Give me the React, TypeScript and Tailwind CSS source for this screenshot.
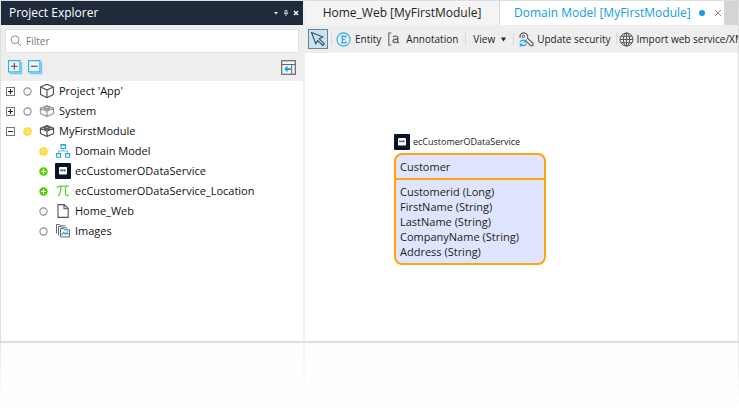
import type { ReactNode } from 'react';

const INK = '#4a4a4a';
const BLUE = '#1fa8ee';

function SearchIcon() {
  return (
    <svg width="12" height="12" viewBox="0 0 12 12" fill="none" stroke="#8c8c8c">
      <circle cx="5" cy="4.7" r="3.9" />
      <path d="M7.8 7.6 11.2 11.2" />
    </svg>
  );
}

function StackIcon({ plus }: { plus?: boolean }) {
  return (
    <svg width="15" height="15" viewBox="0 0 15 15" fill="none">
      <path d="M13.5 2v11.5H2" stroke="#6cc9f5" strokeWidth="1.4" />
      <rect x=".6" y=".6" width="11.3" height="11.3" fill="#f4f4f4" stroke="#26b4f4" strokeWidth="1.2" />
      <path d={plus ? 'M3 6.3h6.6M6.3 3v6.6' : 'M3 6.3h6.6'} stroke={INK} strokeWidth="1.1" />
    </svg>
  );
}

function DockIcon() {
  return (
    <svg width="15" height="15" viewBox="0 0 15 15" fill="none">
      <rect x=".7" y=".7" width="13.6" height="13.6" fill="#f6f6f6" stroke="#666" strokeWidth="1.2" />
      <path d="M1 4.5h13M10.7 4.5V14" stroke="#666" />
      <path d="M9.8 9H5" stroke="#12a6f0" strokeWidth="2" />
      <path d="M6.6 5.8v6.4L3 9z" fill="#12a6f0" />
    </svg>
  );
}

function Expander({ open }: { open?: boolean }) {
  return (
    <svg width="9" height="9" viewBox="0 0 9 9" fill="none">
      <rect x=".5" y=".5" width="8" height="8" stroke="#777" />
      <path d={open ? 'M2 4.5h5' : 'M2 4.5h5M4.5 2v5'} stroke="#222" strokeWidth={open ? 1 : 1.2} />
    </svg>
  );
}

type Status = 'none' | 'changed' | 'added';

function StatusDot({ status }: { status: Status }) {
  return (
    <svg width="9" height="9" viewBox="0 0 9 9">
      {status === 'none' && <circle cx="4.5" cy="4.5" r="3.6" fill="#fff" stroke="#8a8a8a" strokeWidth="1.1" />}
      {status === 'changed' && <circle cx="4.5" cy="4.5" r="3.9" fill="#ffe05c" stroke="#f9d443" />}
      {status === 'added' && (
        <>
          <circle cx="4.5" cy="4.5" r="4.2" fill="#4fd000" />
          <path d="M2 4.5h5M4.5 2v5" stroke="#fff" strokeWidth="1.2" />
        </>
      )}
    </svg>
  );
}

function CubeIcon() {
  return (
    <svg width="16" height="16" viewBox="0 0 16 16" fill="none" stroke={INK} strokeWidth="1.1" strokeLinejoin="round">
      <path d="M8 1.2 14.4 4v7.4L8 14.8 1.6 11.4V4zM1.6 4 8 7l6.4-3M8 7v7.8" />
    </svg>
  );
}

function ModuleIcon({ color }: { color: string }) {
  return (
    <svg width="16" height="16" viewBox="0 0 16 16" fill="none" stroke={color} strokeWidth="1.1" strokeLinejoin="round">
      <path d="M8 2.4 14.6 5.2v5.4L8 13.6l-6.6-3V5.2zM1.4 5.2 8 8.2l6.6-3M8 8.2v5.4" />
      <path d="M5.2 4.6 8 3.6l2.8 1v1.3L8 7 5.2 5.9zM5.2 4.7 8 5.6l2.8-.9" />
    </svg>
  );
}

function DomainIcon() {
  return (
    <svg width="16" height="16" viewBox="0 0 16 16" fill="none" stroke={BLUE} strokeWidth="1.1">
      <path d="M6 1.6h4.4v3.9H6zM1.6 10.5h4v3.7h-4zM10.6 10.5h4v3.7h-4z" />
      <path d="M8.2 5.5V8M3.6 10.5V8h9v2.5" stroke="#6cbfe8" />
      <path d="M6 2h4.4M1.6 10.8h4M10.6 10.8h4" />
    </svg>
  );
}

function ServiceIcon() {
  return (
    <svg width="16" height="16" viewBox="0 0 16 16">
      <rect width="16" height="16" rx="1" fill="#071427" />
      <rect x="4" y="4" width="8" height="7.6" rx=".8" fill="#fff" />
      <path d="M5.2 7.4h5.6" stroke="#3c4658" strokeWidth="1.6" strokeDasharray="1.5 .4" />
    </svg>
  );
}

function PiIcon() {
  return (
    <svg width="16" height="16" viewBox="0 0 16 16" fill="none" stroke="#63d13e" strokeWidth="1.3">
      <path d="M2 5.2C2.4 3.6 3.2 3.2 4.6 3.2H14M5.9 3.4c0 4-.5 7.6-3 9.6M10.5 3.4v7.2c0 2 1.6 2.6 3.1 1.4" />
    </svg>
  );
}

function PageIcon() {
  return (
    <svg width="16" height="16" viewBox="0 0 16 16" fill="none" stroke="#555" strokeWidth="1.1">
      <path d="M3 1.6h6.2l4 4v8.8H3zM9 1.8v4h4" />
    </svg>
  );
}

function ImagesIcon() {
  return (
    <svg width="16" height="16" viewBox="0 0 16 16" fill="none" stroke="#666" strokeWidth="1">
      <path d="M1.5 10.5v-9h3l1 1.3h4.7M3.5 12.5v-9h3l1 1.3h4.7" />
      <path d="M5.5 13.9V5.5h3l1 1.3h5v7.1z" fill="#fff" />
      <path d="m6.6 12 2.2-2.5 1.7 1.7 1.3-1.3 1.8 1.6" stroke={BLUE} strokeWidth="1.3" />
      <circle cx="12.4" cy="8.8" r=".7" fill={BLUE} stroke="none" />
    </svg>
  );
}

function PointerIcon() {
  return (
    <svg width="16" height="16" viewBox="0 0 16 16" fill="none" stroke="#454b50" strokeWidth="1.1" strokeLinejoin="round">
      <path d="M1.5 1.5 13 6 9.2 7.8 14.4 12.8 12.7 14.5 7.6 9.4 5.9 13z" />
    </svg>
  );
}

function EntityIcon() {
  return (
    <svg width="15" height="15" viewBox="0 0 15 15" fill="none" stroke="#27aeef">
      <circle cx="7.5" cy="7.5" r="6.6" strokeWidth="1.1" />
      <path d="M5 4.2h4.8v1.5M5 10.8h4.8V9.3M6.4 4.2v6.6M6.4 7.4h2.5" strokeWidth="1.3" />
    </svg>
  );
}

function AnnotationIcon() {
  return (
    <svg width="12" height="14" viewBox="0 0 12 14" fill="none" stroke="#666">
      <path d="M3.4 1H.8v12h2.6" strokeWidth="1.1" />
      <path d="M5 5.1c1.4-1.5 4.8-1.4 4.8.9V10c0 .5.5.8 1.2.6M9.8 7C6.7 7 5 7.4 5 9.1c0 2 3.5 2 4.8 0" strokeWidth="1.4" />
    </svg>
  );
}

function SecurityIcon() {
  return (
    <svg width="15" height="15" viewBox="0 0 15 15" fill="none">
      <path
        d="M1.2 5.8C.1 2.4 3.2.1 6 1.1c2.3.8 3.2 3.2 2.4 5.1l5.5 5.1v2.4h-2.3l-4.6-4.5"
        stroke="#555"
        strokeWidth="1.1"
      />
      <circle cx="4.4" cy="4.2" r="1.2" stroke="#555" />
      <path d="M1 10.2C2 7.7 5.4 7.5 6.8 9.6M7 7.4v2.4H4.7M7.4 11.7c-1 2.5-4.4 2.6-5.8.6M1.3 14.5V12h2.4" stroke={BLUE} strokeWidth="1.2" />
    </svg>
  );
}

function GlobeIcon() {
  return (
    <svg width="15" height="15" viewBox="0 0 15 15" fill="none" stroke="#555">
      <circle cx="7.5" cy="7.5" r="6.5" />
      <ellipse cx="7.5" cy="7.5" rx="3.1" ry="6.5" />
      <path d="M1 7.5h13M7.5 1v13M2 4.3h11M2 10.7h11" />
    </svg>
  );
}

interface Node {
  label: string;
  status: Status;
  icon: ReactNode;
  level: 0 | 1;
  open?: boolean;
}

const nodes: Node[] = [
  { label: "Project 'App'", status: 'none', icon: <CubeIcon />, level: 0 },
  { label: 'System', status: 'none', icon: <ModuleIcon color="#929292" />, level: 0 },
  { label: 'MyFirstModule', status: 'changed', icon: <ModuleIcon color="#4c4c4c" />, level: 0, open: true },
  { label: 'Domain Model', status: 'changed', icon: <DomainIcon />, level: 1 },
  { label: 'ecCustomerODataService', status: 'added', icon: <ServiceIcon />, level: 1 },
  { label: 'ecCustomerODataService_Location', status: 'added', icon: <PiIcon />, level: 1 },
  { label: 'Home_Web', status: 'none', icon: <PageIcon />, level: 1 },
  { label: 'Images', status: 'none', icon: <ImagesIcon />, level: 1 },
];

const attributes = [
  'Customerid (Long)',
  'FirstName (String)',
  'LastName (String)',
  'CompanyName (String)',
  'Address (String)',
];

function TreeRow({ node }: { node: Node }) {
  return (
    <li className={`flex h-5 items-center whitespace-nowrap ${node.level ? 'pl-[38px]' : 'pl-[5px]'}`}>
      {node.level === 0 && (
        <button aria-label={node.open ? 'Collapse' : 'Expand'} className="mr-2 shrink-0">
          <Expander open={node.open} />
        </button>
      )}
      <span className="mr-[7px] shrink-0"><StatusDot status={node.status} /></span>
      <span className="mr-1 shrink-0">{node.icon}</span>
      <span>{node.label}</span>
    </li>
  );
}

function ProjectExplorer() {
  return (
    <aside className="flex w-[304px] shrink-0 flex-col border-r-2 border-[#f0f0f0] bg-white">
      <header className="flex h-6 items-center bg-[#1f2a3b] pr-1 pl-2 text-white">
        <h1 className="flex-1 text-xs">Project Explorer</h1>
        <div className="flex items-center gap-1">
          <button aria-label="Window menu">
            <svg width="6" height="6" viewBox="0 0 6 6"><path d="M1 2h4L3 4.4z" fill="#fff" /></svg>
          </button>
          <button aria-label="Pin">
            <svg width="6" height="6" viewBox="0 0 6 6" fill="none" stroke="#c3c8cf"><path d="M2 .5h2v2.8H2zM1 3.5h4M3 3.5V6" /></svg>
          </button>
          <button aria-label="Close panel">
            <svg width="6" height="6" viewBox="0 0 6 6" stroke="#fff" strokeWidth="1.4"><path d="m1 1 4 4M5 1 1 5" /></svg>
          </button>
        </div>
      </header>
      <div className="bg-[#eeeeee] px-1 pt-1">
        <label className="flex h-6 items-center gap-1 border border-[#e2e2e2] bg-white pl-1">
          <SearchIcon />
          <input type="text" placeholder="Filter" aria-label="Filter" className="min-w-0 flex-1 text-[10px] outline-none placeholder:text-[#777]" />
        </label>
        <div className="flex h-7 items-center gap-[5px] px-[3px]">
          <button aria-label="Expand all"><StackIcon plus /></button>
          <button aria-label="Collapse all"><StackIcon /></button>
          <button aria-label="Dock" className="ml-auto"><DockIcon /></button>
        </div>
      </div>
      <ul className="flex-1 text-[11px] text-[#111]">
        {nodes.map((n) => <TreeRow key={n.label} node={n} />)}
      </ul>
    </aside>
  );
}

function Divider() {
  return <span className="h-3 w-px shrink-0 bg-[#d9d9d9]" />;
}

function Toolbar() {
  return (
    <div className="flex h-7 items-center overflow-hidden bg-[#eeeeee] pl-[3px] text-[10px] whitespace-nowrap">
      <button aria-label="Select" className="mr-[3px] flex size-5 shrink-0 items-center justify-center border border-[#70818c] bg-[#c4e5f8]">
        <PointerIcon />
      </button>
      <Divider />
      <button className="ml-1 flex shrink-0 items-center gap-1"><EntityIcon />Entity</button>
      <button className="mx-[7px] flex shrink-0 items-center gap-[6px]"><AnnotationIcon />Annotation</button>
      <Divider />
      <button className="mx-[7px] flex shrink-0 items-center gap-[6px]">
        View
        <svg width="5" height="5" viewBox="0 0 5 5"><path d="M0 .5h5L2.5 4.5z" fill="#222" /></svg>
      </button>
      <Divider />
      <button className="mx-[5px] flex shrink-0 items-center gap-[3px]"><SecurityIcon />Update security</button>
      <Divider />
      <button className="ml-[2px] flex shrink-0 items-center gap-[3px]"><GlobeIcon />Import web service/XML</button>
    </div>
  );
}

function EntityNode() {
  return (
    <article className="absolute top-[81px] left-[89px] w-[152px]">
      <div className="flex h-4 items-center gap-[3px] text-[9px]">
        <ServiceIcon />
        ecCustomerODataService
      </div>
      <div className="mt-[3px] rounded-lg border-2 border-[#ffa50a] bg-[#e0e5ff] text-[11px] leading-[15px]">
        <h2 className="border-b-2 border-[#ffa50a] px-1 py-1">Customer</h2>
        <ul className="px-1 py-1">
          {attributes.map((a) => <li key={a}>{a}</li>)}
        </ul>
      </div>
    </article>
  );
}

export default function App() {
  return (
    <div className="bg-white font-['Open_Sans','Noto_Sans',sans-serif] text-[#222]">
      <div className="flex border border-b-2 border-[#dedede]">
        <ProjectExplorer />
        <main className="flex min-w-0 flex-1 flex-col">
          <nav className="flex h-6 bg-[#d4d4d4] text-xs whitespace-nowrap">
            <button className="w-[195px] shrink-0 border-r border-[#dddddd] bg-[#f4f4f4]">Home_Web [MyFirstModule]</button>
            <div className="flex w-[224px] shrink-0 items-center bg-white pl-[14px] text-[#139be5]">
              <button>Domain Model [MyFirstModule]</button>
              <span className="ml-2 size-[6px] rounded-full bg-[#139be5]" />
              <button aria-label="Close tab" className="mr-[2px] ml-auto">
                <svg width="8" height="8" viewBox="0 0 8 8" stroke="#8c8c8c"><path d="m1 1 6 6M7 1 1 7" /></svg>
              </button>
            </div>
          </nav>
          <Toolbar />
          <section aria-label="Domain model canvas" className="relative min-h-[288px] flex-1 bg-white">
            <EntityNode />
          </section>
        </main>
      </div>
      <div aria-hidden="true" className="flex h-16 bg-linear-to-b from-[#e8e8e8] to-white px-px">
        <div className="w-[302px] bg-[#fefefe]" />
        <div className="w-[2px] bg-linear-to-b from-[#f4f4f4] to-white" />
        <div className="flex-1 bg-[#fefefe]" />
      </div>
    </div>
  );
}
